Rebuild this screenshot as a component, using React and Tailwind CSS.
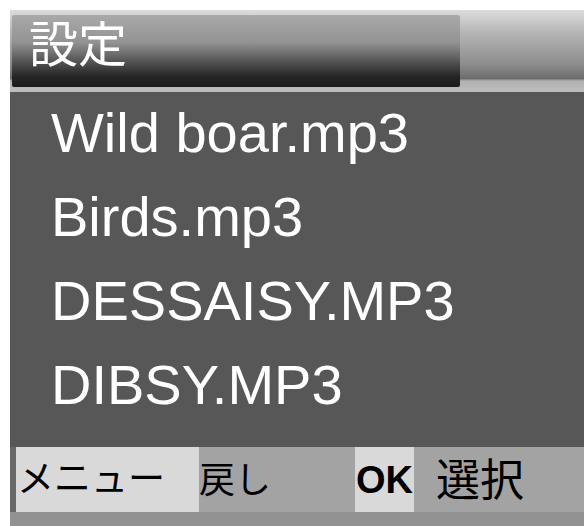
import React from 'react';

const files = ['Wild boar.mp3', 'Birds.mp3', 'DESSAISY.MP3', 'DIBSY.MP3'];

const jp = "font-['Noto_Sans_CJK_JP',sans-serif]";

export default function App() {
  return (
    <div className="w-[587px] h-[526px] bg-white pt-[10px] pl-[10px] pr-[3px] overflow-hidden">
      <div className="flex flex-col h-[516px] bg-[#6a6a6a]">
        {/* header */}
        <div className="h-[78px] flex bg-[linear-gradient(to_bottom,#dcdcdc_0%,#b4b4b4_30%,#8c8c8c_70%,#6c6c6c_88%,#b2b2b2_91%,#b8b8b8_100%)]">
          <div className="ml-[2px] mt-[5px] mb-[1px] w-[448px] rounded-[2px] bg-[linear-gradient(to_bottom,#a9a9a9_0%,#939393_38%,#5a5a5a_62%,#262626_85%,#1a1a1a_100%)] pl-[17px] pt-[1px]">
            <span className={`${jp} text-[49px] leading-none text-white`}>設定</span>
          </div>
        </div>
        <div className="h-[4px] bg-[#bcbcbc]" />

        {/* list */}
        <div className="h-[355px] bg-[#575757] pl-[41px] pt-[0px]">
          {files.map((f) => (
            <div
              key={f}
              className="h-[84px] leading-[82px] text-[56px] text-white font-['Liberation_Sans',Arial,sans-serif] whitespace-nowrap"
            >
              {f}
            </div>
          ))}
        </div>

        {/* soft keys */}
        <div className="h-[65px] flex items-stretch bg-[#a3a3a3]">
          <div className="w-[6px] bg-[#676767]" />
          <div className={`w-[183px] bg-[#d9d9d9] flex items-center pl-[1px] pb-[6px] ${jp} text-[37px] text-black`}>
            メニュー
          </div>
          <div className={`w-[156px] flex items-center pb-[6px] ${jp} text-[36px] text-black`}>戻し</div>
          <div className="w-[59px] bg-[#d9d9d9] flex items-center pl-[1px] pt-[2px] font-['Liberation_Sans',Arial,sans-serif] font-bold text-[38px] text-black">
            OK
          </div>
          <div className={`flex items-center pl-[22px] pb-[6px] ${jp} text-[44px] text-black`}>選択</div>
        </div>
        <div className="flex-1 bg-[#929292]" />
      </div>
    </div>
  );
}
